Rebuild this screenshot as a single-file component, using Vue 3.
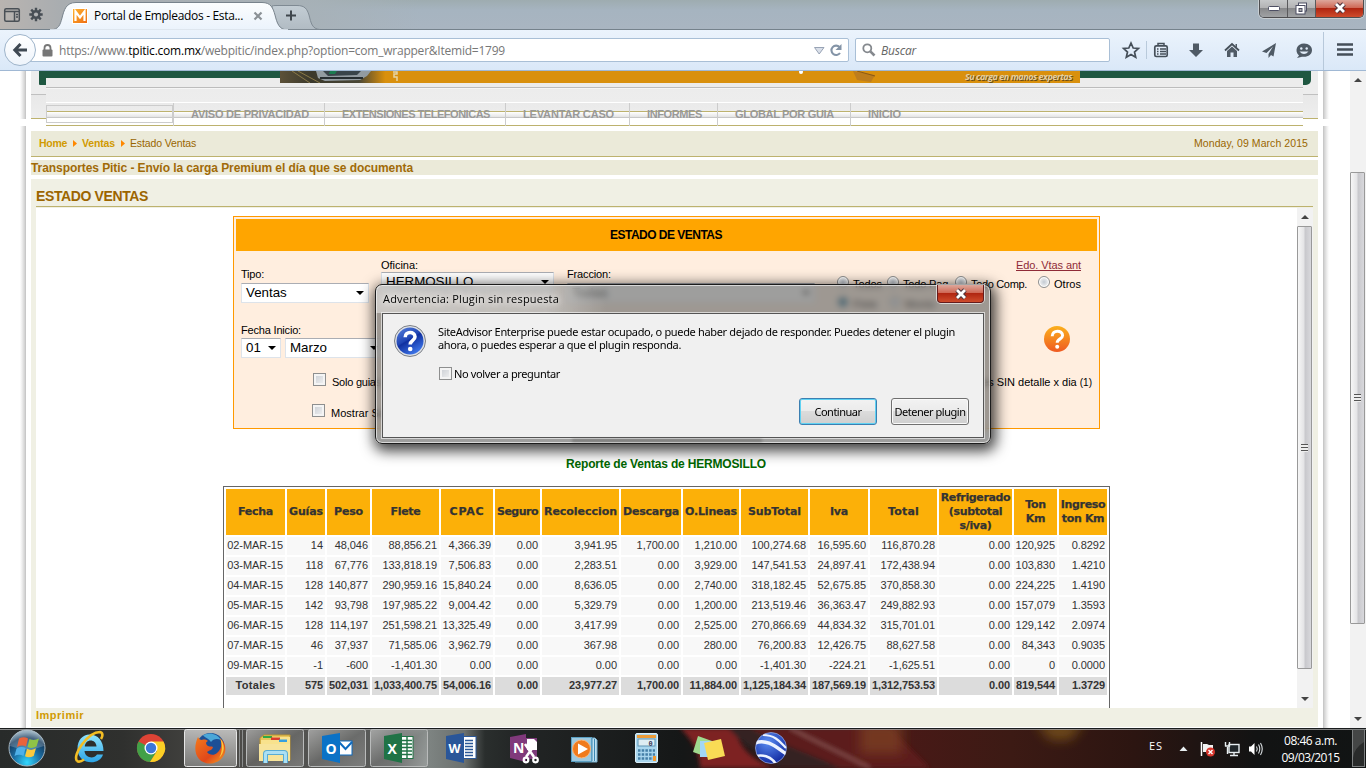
<script setup>
// Adjusts tracking so that a line of text fills the given width in pixels.
const vFit = {
  mounted(el, { value }) {
    const range = document.createRange()
    range.selectNodeContents(el)
    const gap = value - range.getBoundingClientRect().width
    el.style.letterSpacing = (gap / el.textContent.trim().length).toFixed(4) + 'px'
  }
}

const menu = [
  ['AVISO DE PRIVACIDAD', 151, 118],
  ['EXTENSIONES TELEFONICAS', 181, 148],
  ['LEVANTAR CASO', 124, 91],
  ['INFORMES', 88, 55],
  ['GLOBAL POR GUIA', 133, 99],
  ['INICIO', 60, 33]
]

const heads = ['Fecha', 'Guías', 'Peso', 'Flete', 'CPAC', 'Seguro', 'Recoleccion', 'Descarga', 'O.Lineas', 'SubTotal', 'Iva', 'Total', 'Refrigerado\n(subtotal\ns/iva)', 'Ton\nKm', 'Ingreso\nton Km']
const headWidths = [35, 34, 29, 30, 35, 41, 73, 56, 52, 53, 18, 31, 0, 0, 0]
const rows = [
  ['02-MAR-15', '14', '48,046', '88,856.21', '4,366.39', '0.00', '3,941.95', '1,700.00', '1,210.00', '100,274.68', '16,595.60', '116,870.28', '0.00', '120,925', '0.8292'],
  ['03-MAR-15', '118', '67,776', '133,818.19', '7,506.83', '0.00', '2,283.51', '0.00', '3,929.00', '147,541.53', '24,897.41', '172,438.94', '0.00', '103,830', '1.4210'],
  ['04-MAR-15', '128', '140,877', '290,959.16', '15,840.24', '0.00', '8,636.05', '0.00', '2,740.00', '318,182.45', '52,675.85', '370,858.30', '0.00', '224,225', '1.4190'],
  ['05-MAR-15', '142', '93,798', '197,985.22', '9,004.42', '0.00', '5,329.79', '0.00', '1,200.00', '213,519.46', '36,363.47', '249,882.93', '0.00', '157,079', '1.3593'],
  ['06-MAR-15', '128', '114,197', '251,598.21', '13,325.49', '0.00', '3,417.99', '0.00', '2,525.00', '270,866.69', '44,834.32', '315,701.01', '0.00', '129,142', '2.0974'],
  ['07-MAR-15', '46', '37,937', '71,585.06', '3,962.79', '0.00', '367.98', '0.00', '280.00', '76,200.83', '12,426.75', '88,627.58', '0.00', '84,343', '0.9035'],
  ['09-MAR-15', '-1', '-600', '-1,401.30', '0.00', '0.00', '0.00', '0.00', '0.00', '-1,401.30', '-224.21', '-1,625.51', '0.00', '0', '0.0000']
]
const totals = ['Totales', '575', '502,031', '1,033,400.75', '54,006.16', '0.00', '23,977.27', '1,700.00', '11,884.00', '1,125,184.34', '187,569.19', '1,312,753.53', '0.00', '819,544', '1.3729']
</script>

<template>
  <div class="screen">
    <header class="titlebar">
      <svg class="tabs" width="330" height="30" viewBox="0 0 330 30">
        <defs>
          <linearGradient id="tabg" x1="0" y1="0" x2="0" y2="1"><stop offset="0" stop-color="#fbfdfe" /><stop offset="1" stop-color="#ebf3fc" /></linearGradient>
          <linearGradient id="ntab" x1="0" y1="0" x2="0" y2="1"><stop offset="0" stop-color="#c3cdd4" /><stop offset="1" stop-color="#b1bbc3" /></linearGradient>
          <linearGradient id="fav" x1="0" y1="0" x2="1" y2="1"><stop offset="0" stop-color="#ffb632" /><stop offset="1" stop-color="#ee6b12" /></linearGradient>
        </defs>
        <path d="M272 29.500 V6 Q273 5.500 277 5.500 H297 C305 5.500 307 9 309 15 C311 23 312 29 320 29.500Z" fill="url(#ntab)" stroke="#7f8a93" />
        <path d="M50 30 C59 29.500 60 25 62 18 C64 10 66 2.500 76 2.500 H262 C271 2.500 273 8 275 15 C277 23 279 29.500 287 30Z" fill="url(#tabg)" stroke="#78838c" />
        <path d="M50 30H288" stroke="#edf4fc" stroke-width="1.500" />
        <g fill="none" stroke="#4a5056" stroke-width="1.500"><rect x="4.700" y="8.700" width="14.600" height="12.600" rx="1.500" /><path d="M5 11.500H19M14.500 12V21M16 14.500H18M16 17H18" /></g>
        <g stroke="#484f56" stroke-width="2.400"><path d="M36 7.800V21.200M29.300 14.500H42.700M31.200 9.700L40.800 19.300M40.800 9.700L31.200 19.300" /></g>
        <circle cx="36" cy="14.500" r="4.600" fill="#484f56" /><circle cx="36" cy="14.500" r="2.100" fill="#b3b5b6" />
        <rect x="72.500" y="8.500" width="15" height="15" fill="url(#fav)" stroke="#fff" />
        <path d="M75.500 21V11.500L80 17.500L84.500 11.500V21" fill="none" stroke="#fff" stroke-width="2.200" />
        <path d="M254.500 12.500L261.500 19.500M261.500 12.500L254.500 19.500" stroke="#8b9196" stroke-width="2.200" />
        <path d="M286 15.500H296M291 10.500V20.500" stroke="#3f464c" stroke-width="2" />
      </svg>
      <span class="tab-title"><span v-fit="149">Portal de Empleados - Esta...</span></span>
      <div class="winbtns">
        <div class="wb"><svg width="14" height="8"><rect x="1.500" y="2.500" width="11" height="4" rx="1" fill="#fff" stroke="#4d4f63" /></svg></div>
        <div class="wb"><svg width="14" height="13"><rect x="3.500" y="1" width="8" height="8" fill="#fff" stroke="#4d4f63" /><rect x="1" y="3.500" width="9" height="8.500" fill="#fff" stroke="#4d4f63" /><rect x="4" y="6.500" width="3" height="3" fill="#aaa" stroke="#4d4f63" /></svg></div>
        <div class="wb close"><svg width="14" height="12" viewBox="0 0 14 12"><path d="M3 2L11 10M11 2L3 10" stroke="#50343c" stroke-width="5" /><path d="M3 2L11 10M11 2L3 10" stroke="#fff" stroke-width="2.800" /></svg></div>
      </div>
    </header>

    <div class="toolbar">
      <div class="url">
        <svg class="lock" width="11" height="13" viewBox="0 0 11 13"><path d="M2.500 6V4a3 3 0 0 1 6 0V6" fill="none" stroke="#777" stroke-width="1.800" /><rect x="0.500" y="5.500" width="10" height="7" rx="1" fill="#777" /></svg>
        <span class="addr"><span v-fit="446">https://www.<b>tpitic.com.mx</b>/webpitic/index.php?option=com_wrapper&amp;Itemid=1799</span></span>
        <svg class="urlend" width="36" height="16" viewBox="0 0 36 16"><path d="M5.500 5.500H15L10.200 12Z" fill="#d9dfe9" stroke="#98a3b5" /><path d="M31 11A4.700 4.700 0 1 1 30.500 5" fill="none" stroke="#8494a7" stroke-width="2.100" /><path d="M32.500 2V8H26.500Z" fill="#8494a7" /></svg>
      </div>
      <div class="search">
        <svg width="14" height="14" viewBox="0 0 14 14"><circle cx="5.300" cy="5.300" r="4" fill="none" stroke="#85898e" stroke-width="1.800" /><path d="M8.300 8.300L12.500 12.500" stroke="#85898e" stroke-width="2.600" /></svg>
        <i v-fit="35">Buscar</i>
      </div>
      <svg class="tools" width="256" height="40" viewBox="1110 30 256 40">
        <path d="M1131 43L1133.200 48L1138.400 48.500L1134.500 52L1135.700 57.200L1131 54.400L1126.300 57.200L1127.500 52L1123.600 48.500L1128.800 48Z" fill="none" stroke="#454f59" stroke-width="1.700" />
        <path d="M1146.500 41V59" stroke="#b9cadb" />
        <rect x="1154.800" y="45.800" width="12.400" height="10.700" rx="1.500" fill="none" stroke="#454f59" stroke-width="1.700" /><path d="M1158 45V43.500H1164V45M1157 49H1158.500M1160 49H1166M1157 51.500H1158.500M1160 51.500H1166M1157 54H1158.500M1160 54H1166" fill="none" stroke="#454f59" stroke-width="1.500" />
        <path d="M1193 43.500H1199V50H1203L1196 57L1189 50H1193Z" fill="#4f5a65" />
        <path d="M1225 50.500L1232 44L1239 50.500" fill="none" stroke="#454f59" stroke-width="1.800" /><path d="M1227 51L1232 46.500L1237 51V57H1233.500V52.500H1230.500V57H1227ZM1235.500 44H1237V48L1235.500 46.500Z" fill="#505b66" />
        <path d="M1276 43L1262 51.500L1266.500 53L1273 46.500L1268.500 54V58L1271 55L1273.500 56.500Z" fill="#4f5a65" />
        <path d="M1304 43.500C1309 43.500 1312 46.500 1312 50.200C1312 54 1308.500 56.800 1304 56.800H1302L1297 58L1299 55.500C1294 51 1297 43.500 1304 43.500Z" fill="#4f5a65" /><circle cx="1301.300" cy="48.500" r="1.200" fill="#e1ecf8" /><circle cx="1306.700" cy="48.500" r="1.200" fill="#e1ecf8" /><path d="M1299.500 51.500H1308.500Q1304 56.500 1299.500 51.500" fill="#e1ecf8" />
        <path d="M1323.500 32V70" stroke="#b7c8da" />
        <path d="M1337 44.500H1353M1337 49.500H1353M1337 54.500H1353" stroke="#454f59" stroke-width="2.600" />
      </svg>
      <div class="back"><svg width="16" height="16" viewBox="0 0 16 16"><path d="M8.500 2L2.800 8L8.500 14M3 8H15" fill="none" stroke="#3f4953" stroke-width="3" /></svg></div>
    </div>

    <main class="page">
      <div class="edge left"></div>
      <div class="sheet">
        <div class="masthead">
          <div class="green"></div>
          <div class="strip">
            <nav class="menu">
              <div class="blank"></div>
              <div v-for="m in menu" :key="m[0]" class="mi" :style="{ width: m[1] + 'px' }"><span v-fit="m[2]">{{ m[0] }}</span></div>
            </nav>
          </div>
          <div class="banner">
            <svg width="120" height="12" viewBox="0 0 120 12"><defs><linearGradient id="ph" x1="0" x2="1"><stop offset="0" stop-color="#5c5138" /><stop offset=".3" stop-color="#3b392c" /><stop offset=".75" stop-color="#494635" /><stop offset="1" stop-color="#d98f0b" /></linearGradient></defs><rect width="105" height="12" fill="url(#ph)" /><path d="M12 0L30 12M18 0L40 12" stroke="#8a7a48" /><path d="M36 0H91L87 5L80 9L45 10L38 7Z" fill="#929ba1" /><path d="M43 0H81L77 4L48 5Z" fill="#39444a" /><path d="M50 0H57L55 3H49Z" fill="#1b7b51" /><path d="M40 7H83" stroke="#272e31" stroke-width="2" /><path d="M113 1H117V3H114V6H117V10" fill="none" stroke="#e5d3a4" stroke-width="1.500" /></svg>
            <svg class="deco" width="90" height="12" viewBox="0 0 90 12"><circle cx="10" cy="1" r="2" fill="#fff" /><path d="M114 0" /><path d="M62 0L84 4L80 11L66 9Z" fill="#bd7d1d" /><path d="M66 0L84 5" stroke="#8b5a16" /></svg>
            <span class="slogan" v-fit="107">Su carga en manos expertas</span>
          </div>
        </div>
        <div class="crumbs">
          <b v-fit="28">Home</b><svg width="5" height="7"><path d="M0 0L4 3.500L0 7Z" fill="#f80" /></svg>
          <b v-fit="33">Ventas</b><svg width="5" height="7"><path d="M0 0L4 3.500L0 7Z" fill="#f80" /></svg>
          <span v-fit="66">Estado Ventas</span>
          <span class="date" v-fit="114">Monday, 09 March 2015</span>
        </div>
        <div class="news"><b v-fit="382">Transportes Pitic - Envío la carga Premium el día que se documenta</b></div>
        <section class="panel">
          <h1><span v-fit="112">ESTADO VENTAS</span></h1>
          <div class="frame">
            <div class="doc">
              <div class="filters">
                <div class="fhead"><span v-fit="112">ESTADO DE VENTAS</span></div>
                <div class="row one">
                  <div class="field tipo"><label v-fit="23">Tipo:</label><div class="select">Ventas<i></i></div></div>
                  <div class="field oficina"><label v-fit="37">Oficina:</label><div class="select">HERMOSILLO<i></i></div></div>
                  <div class="field fraccion"><label v-fit="44">Fraccion:</label><div class="select">Todas<i></i></div></div>
                  <div class="radios">
                    <a v-fit="65">Edo. Vtas ant</a>
                    <div class="rline"><i class="radio"></i><span class="r1" v-fit="29">Todos</span><i class="radio"></i><span class="r2" v-fit="48">Todo Pag.</span><i class="radio"></i><span class="r3" v-fit="56">Todo Comp.</span><i class="radio"></i><span v-fit="27">Otros</span></div>
                    <div class="rline second"><i class="radio on"></i><span>Flete</span><i class="radio"></i><span>Monto</span></div>
                  </div>
                </div>
                <div class="row two">
                  <div class="field"><label v-fit="60">Fecha Inicio:</label><div class="pair"><div class="select day">01<i></i></div><div class="select month">Marzo<i></i></div></div></div>
                  <svg class="help" width="28" height="28" viewBox="0 0 28 28"><defs><linearGradient id="hg" x1="0" y1="0" x2="0" y2="1"><stop offset="0" stop-color="#fbb01c" /><stop offset="1" stop-color="#ef5a22" /></linearGradient></defs><circle cx="14" cy="14" r="13" fill="url(#hg)" /><path d="M9.200 11.200C9.200 4.500 19.600 4.600 19.600 10.600C19.600 14 14.200 13.800 14.200 17.800" fill="none" stroke="#fff" stroke-width="3" /><circle cx="14.200" cy="21.700" r="2" fill="#fff" /></svg>
                </div>
                <div class="row three"><i class="check"></i><span v-fit="49">Solo guias</span><span class="sin" v-fit="110">es SIN detalle x dia <small>(1)</small></span></div>
                <div class="row four"><i class="check"></i><span v-fit="54">Mostrar Sa</span></div>
              </div>
              <h2><span v-fit="200">Reporte de Ventas de HERMOSILLO</span></h2>
              <div class="report">
                <div v-for="(h, i) in heads" :key="h" class="th"><span v-if="headWidths[i]" v-fit="headWidths[i]">{{ h }}</span><span v-else class="multi">{{ h }}</span></div>
                <template v-for="r in rows" :key="r[0]"><div v-for="(c, i) in r" :key="i" class="td">{{ c }}</div></template>
                <div v-for="(c, i) in totals" :key="'t' + i" class="td tot">{{ c }}</div>
              </div>
            </div>
            <div class="bar inner"><i class="up"></i><div class="thumb"><i class="grip"></i></div><i class="down"></i></div>
          </div>
          <div class="print"><span v-fit="48">Imprimir</span></div>
        </section>
      </div>
      <div class="edge right"></div>
      <div class="bar outer"><i class="up"></i><div class="thumb"><i class="grip"></i></div><i class="down"></i></div>
    </main>

    <footer class="taskbar">
      <svg width="1366" height="40" viewBox="0 728 1366 40">
        <defs>
          <filter id="soft" x="-20%" y="-60%" width="140%" height="220%"><feGaussianBlur stdDeviation="6" /></filter>
          <filter id="soft2"><feGaussianBlur stdDeviation="2" /></filter>
          <linearGradient id="tb" x1="0" x2="1366" gradientUnits="userSpaceOnUse">
            <stop offset="0" stop-color="#282b2a" /><stop offset=".09" stop-color="#2f302e" /><stop offset=".17" stop-color="#4c4b48" /><stop offset=".29" stop-color="#5a5c5b" /><stop offset=".315" stop-color="#7d8381" /><stop offset=".34" stop-color="#6b706e" /><stop offset=".355" stop-color="#2a2e2d" /><stop offset=".38" stop-color="#222525" /><stop offset=".5" stop-color="#151717" /><stop offset=".65" stop-color="#4a1917" /><stop offset=".74" stop-color="#3c1a14" /><stop offset=".83" stop-color="#2c1511" /><stop offset=".92" stop-color="#121313" /><stop offset="1" stop-color="#111414" />
          </linearGradient>
          <linearGradient id="gloss" x1="0" y1="0" x2="0" y2="1"><stop offset="0" stop-color="#fff" stop-opacity=".62" /><stop offset="1" stop-color="#fff" stop-opacity=".3" /></linearGradient>
          <linearGradient id="gloss2" x1="0" y1="0" x2="1" y2="1"><stop offset="0" stop-color="#fff" stop-opacity=".45" /><stop offset=".5" stop-color="#fff" stop-opacity=".12" /><stop offset="1" stop-color="#fff" stop-opacity=".22" /></linearGradient>
          <radialGradient id="orb" cx=".5" cy=".9" r=".85"><stop offset="0" stop-color="#32d8ff" /><stop offset=".45" stop-color="#1b6ea4" /><stop offset=".8" stop-color="#153a5d" /><stop offset="1" stop-color="#7f9db0" /></radialGradient>
          <linearGradient id="ie" x1="0" y1="0" x2="0" y2="1"><stop offset="0" stop-color="#8fe4ff" /><stop offset="1" stop-color="#2ba4e6" /></linearGradient>
          <linearGradient id="fox" x1="0" y1="0" x2="1" y2="1"><stop offset="0" stop-color="#f47a1c" /><stop offset=".6" stop-color="#e0481a" /><stop offset="1" stop-color="#f7a325" /></linearGradient>
          <radialGradient id="ge" cx=".4" cy=".3" r=".8"><stop offset="0" stop-color="#5a8cf2" /><stop offset="1" stop-color="#0b2198" /></radialGradient>
          <clipPath id="globe"><circle cx="771" cy="748" r="15.500" /></clipPath>
        </defs>
        <rect y="728" width="1366" height="40" fill="url(#tb)" />
        <g filter="url(#soft2)"><path d="M680 728H735C738 745 750 760 775 768H700C700 750 690 738 680 728Z" fill="#7d2422" /><path d="M728 728H890L930 768H780C760 755 745 740 728 728Z" fill="#5c1a1b" /><path d="M728 728H750C780 745 815 755 840 768H780C760 755 740 742 728 728Z" fill="#2b2526" opacity=".8" /><path d="M790 728C820 744 840 752 870 768" stroke="#84504e" stroke-width="3" fill="none" /></g>
        <g filter="url(#soft)"><rect x="860" y="722" width="42" height="32" fill="#7b401f" opacity=".75" /><path d="M1035 722H1085L1070 740H1050Z" fill="#7a5418" opacity=".8" /></g>
        <path d="M0 728.500H1366" stroke="#1a1d1e" /><path d="M0 729.500H1366" stroke="#aaa" opacity=".75" />
        <g stroke="#b9bbbb">
          <rect x="184.500" y="729.500" width="52" height="37" rx="2" fill="url(#gloss)" stroke="#e6e6e6" /><path d="M239.500 730V767M242.500 730V767" stroke="#8b8d8d" />
          <rect x="246.500" y="729.500" width="57" height="37" rx="2" fill="url(#gloss2)" /><rect x="308.500" y="729.500" width="57" height="37" rx="2" fill="url(#gloss2)" /><rect x="370.500" y="729.500" width="57" height="37" rx="2" fill="url(#gloss2)" />
        </g>
        <circle cx="27" cy="748" r="18" fill="url(#orb)" stroke="#a7b7c1" /><path d="M10 746A17 16 0 0 1 44 746Q27 753 10 746" fill="#fff" opacity=".22" />
        <path d="M19 738.500Q24 736 28 738.500L26 746.500Q22 744.500 17 747Z" fill="#e9633b" /><path d="M29.500 739Q34 741 39 738.500L36.500 746.500Q32 749 27.500 747Z" fill="#8fc447" /><path d="M16.500 748.500Q21 746 25.600 748L23.500 756Q19 753.500 14.500 756Z" fill="#4fb0e8" /><path d="M27 748.700Q31.500 751 36 748.300L33.700 756Q29 758.500 25 756.300Z" fill="#fbc93d" />
        <path d="M89.500 734.500C98 734.500 103.500 741 103.500 751H84.500C85 758 94 759.500 97 754.500H103C100 766 77.500 765.500 77.500 748.500C77.500 740 83 734.500 89.500 734.500ZM84.800 746.500H96.500C96 738.500 85.500 738.500 84.800 746.500Z" fill="url(#ie)" fill-rule="evenodd" />
        <path d="M77 761C72 755 88 732 100 732C103 732.500 103 736 101 739M77 761C79 762.500 82 761 84 759.500" fill="none" stroke="#f3bd24" stroke-width="2.600" />
        <circle cx="151" cy="748" r="14" fill="#dd4335" /><path d="M151 748L138.500 741.500A14 14 0 0 0 150 762L157 751Z" fill="#42a047" /><path d="M151 741.500H163.500A14 14 0 0 1 150 762L157 751Z" fill="#fbcf25" /><circle cx="151" cy="748" r="6.500" fill="#fff" /><circle cx="151" cy="748" r="5.200" fill="#3c76d8" />
        <circle cx="210.500" cy="747" r="14" fill="#1c4f96" /><path d="M203 735.500C208 732 217 733 221 740C217 738 213 739 211 742C209 739 206 738 203 735.500Z" fill="#4ba7d8" />
        <path d="M198 737C199 739 200 740 202 740C204 739 207 740 208 741C205 742 206 745 208 746C210 747 211 746 213 747C212 751 209 750 207 752C209 755 214 756 217 753C222 749 222 743 220 738C226 743 226.500 750 224 755C219 765 205 766 199 759C193.500 752.500 195 743 198 737Z" fill="url(#fox)" />
        <path d="M220 738C225.500 744 225 753 219 758C222 754 223 745 220 738Z" fill="#fbc93a" />
        <path d="M260 738L264 735H290V760H260Z" fill="#e8c65b" stroke="#bb9431" /><path d="M261 740H271L273 737H290V760H261Z" fill="#f8e28d" /><rect x="263" y="736" width="9" height="2" fill="#32a944" /><rect x="271" y="737.500" width="9" height="2.500" fill="#d93d2e" /><rect x="279" y="739.500" width="8" height="2.500" fill="#369fe0" /><path d="M264 744H290V761H259V744Z" fill="#f7e49b" /><path d="M265.500 763V754Q265.500 752.500 267 752.500H284Q285.500 752.500 285.500 754V763" fill="none" stroke="#59acd4" stroke-width="5" /><path d="M265.500 763V754Q265.500 752.500 267 752.500H284Q285.500 752.500 285.500 754V763" fill="none" stroke="#ace0f4" stroke-width="3" />
        <rect x="337" y="741" width="15" height="14" fill="#fff" stroke="#0d6abf" /><path d="M339 742L345.500 749L352 742" fill="none" stroke="#0d6abf" stroke-width="2" /><path d="M322 736L340 733V763L322 759Z" fill="#0b72c6" /><text x="325.500" y="753.500" class="appletter">O</text>
        <rect x="401" y="736.500" width="12" height="22" fill="#fff" stroke="#207245" /><path d="M402 740.500H412M402 744H412M402 747.500H412M402 751H412M402 754.500H412M407 737V758" stroke="#207245" stroke-width="1.400" /><path d="M384 736L402 733V763L384 759Z" fill="#207346" /><text x="387.500" y="753.500" class="appletter">X</text>
        <rect x="463" y="736.500" width="13" height="22" fill="#fff" stroke="#2b5797" /><path d="M465 740.500H473M465 743.500H473M465 746.500H473M465 749.500H473M465 752.500H473M465 755.500H473" stroke="#2b5797" stroke-width="1.300" /><path d="M446 736L464 733V763L446 759Z" fill="#2a5699" /><text x="448.500" y="753" class="appletter w">W</text>
        <rect x="524" y="738" width="13" height="21" fill="#7d3b7a" /><path d="M527 739H534L537 742V750H527Z" fill="#fff" /><path d="M510 737L526 734V762L510 758Z" fill="#80397b" /><text x="513" y="753" class="appletter">N</text>
        <g fill="none" stroke="#fff" stroke-width="2.600"><path d="M525 744L534 757M536 743L526 757" /><circle cx="526" cy="760" r="2.300" stroke-width="2.200" /><circle cx="535.500" cy="760" r="2.300" stroke-width="2.200" /></g>
        <path d="M575 738H595L597 740V762H575Z" fill="#bfe0f0" stroke="#75afcd" /><path d="M592 738V761M594.500 739V761" stroke="#3c87b1" /><rect x="571.500" y="737.500" width="20" height="24" fill="#9ec9df" stroke="#5a9fc2" /><circle cx="581.500" cy="749" r="9" fill="#f07b1d" stroke="#fbb67a" /><path d="M578 743.500L588 749L578 754.500Z" fill="#fff" />
        <rect x="635.500" y="733.500" width="22" height="29" rx="1.500" fill="#a9d6ee" stroke="#dceff8" /><rect x="637" y="735" width="19" height="3" fill="#ed9c39" /><rect x="638" y="739" width="17" height="7" fill="#deedf3" stroke="#5f94b3" /><text x="648.500" y="745.500" class="zero">0</text><path d="M638 750.500H655M638 754.500H655M638 758.500H655" stroke="#447fa7" stroke-width="2.400" stroke-dasharray="2.500 1.200" /><rect x="653" y="756" width="3" height="5" fill="#f39a32" />
        <path d="M698 736L712 741L707 757L693 752Z" fill="#a0da8f" /><path d="M700 741H716V757H700Z" fill="#a3d7f4" /><path d="M704 743L721 739L725 756L708 760Z" fill="#f9db55" />
        <circle cx="771" cy="748" r="15.500" fill="url(#ge)" stroke="#9fb2e8" stroke-width=".7" /><g clip-path="url(#globe)" fill="none" stroke="#edf3ff"><path d="M755 743C768 738 778 749 788 755" stroke-width="3.500" /><path d="M763 735C776 735 781 743 786 748" stroke-width="2.200" /><path d="M755 756C765 754 772 758 776 764" stroke-width="2.500" /></g>
        <path d="M1179.500 751L1183.500 746.500L1187.500 751Z" fill="#e8eef0" />
        <path d="M1201.500 742V756" stroke="#fff" stroke-width="1.500" /><path d="M1203 744H1207L1209 745H1213V753H1208L1206 752H1203Z" fill="#f2f2f2" /><circle cx="1210.500" cy="752" r="4.500" fill="#d8362c" /><path d="M1208.500 750L1212.500 754M1212.500 750L1208.500 754" stroke="#fff" stroke-width="1.400" />
        <rect x="1229" y="744.500" width="10" height="8" fill="#20262a" stroke="#e8eef1" stroke-width="1.400" /><path d="M1230 755.500H1238M1234 753V755M1225.500 742V746.500M1229.500 742V746.500M1225 746H1230M1227.500 747V754" stroke="#e8eef1" stroke-width="1.400" />
        <path d="M1249 746.500H1251L1254.500 743V755L1251 751.500H1249Z" fill="#fff" /><path d="M1256.500 746.500Q1258 749 1256.500 751.500M1258.500 744.500Q1261 749 1258.500 753.500M1260.500 743Q1264 749 1260.500 755" fill="none" stroke="#dce1e4" stroke-width="1.100" />
        <rect x="1352.500" y="729.500" width="12" height="37" fill="#fff" fill-opacity=".1" stroke="#7c7f80" /><path d="M1353 730H1364V742Q1354 748 1353 758Z" fill="#fff" opacity=".13" />
      </svg>
      <span class="lang" v-fit="14">ES</span>
      <div class="clock"><span v-fit="53">08:46 a.m.</span><span v-fit="58">09/03/2015</span></div>
    </footer>

    <div class="dialog">
      <div class="dtitle"><span v-fit="176">Advertencia: Plugin sin respuesta</span></div>
      <div class="dclose"><svg width="14" height="12" viewBox="0 0 14 12"><path d="M3 2L11 10M11 2L3 10" stroke="#50343c" stroke-width="4.800" /><path d="M3 2L11 10M11 2L3 10" stroke="#fff" stroke-width="2.800" /></svg></div>
      <div class="client">
        <svg class="q" width="34" height="34" viewBox="0 0 34 34"><defs><linearGradient id="qb" x1="0" y1="0" x2="0.600" y2="1"><stop offset="0" stop-color="#5a83dd" /><stop offset=".5" stop-color="#2045b4" /><stop offset=".55" stop-color="#1030a0" /><stop offset="1" stop-color="#3c73e6" /></linearGradient></defs><circle cx="17" cy="17" r="15.500" fill="#dfe2e6" stroke="#7b7f86" /><circle cx="17" cy="17" r="13.500" fill="url(#qb)" /><path d="M12.200 13.200C12.200 7 22 7.200 22 12.800C22 16.500 17.200 16.200 17.200 20.500" fill="none" stroke="#fff" stroke-width="3.600" /><circle cx="17.200" cy="25" r="2.300" fill="#fff" /></svg>
        <div class="msg">
          <p><span v-fit="517">SiteAdvisor Enterprise puede estar ocupado, o puede haber dejado de responder. Puedes detener el plugin</span></p>
          <p><span v-fit="243">ahora, o puedes esperar a que el plugin responda.</span></p>
          <div class="again"><i class="check"></i><span v-fit="106">No volver a preguntar</span></div>
        </div>
        <div class="dbtns"><div class="btn primary"><span v-fit="47">Continuar</span></div><div class="btn"><span v-fit="71">Detener plugin</span></div></div>
      </div>
      <div class="haze"></div>
    </div>
  </div>
</template>

<style>
html, body { margin: 0; overflow: hidden; }
</style>

<style scoped>
* { box-sizing: border-box; }
.screen { position: relative; width: 1366px; height: 768px; display: flex; flex-direction: column; overflow: hidden; background: #fff; font: 11px/14px "Liberation Sans", Arial, sans-serif; color: #000; white-space: nowrap; }
svg { display: block; flex: none; }
.titlebar { flex: none; display: flex; height: 30px; border-bottom: 1px solid #75828c; background: linear-gradient(90deg, #b9b4b0 0, #a9adb0 60px, #a7b1b7 300px, transparent 420px), linear-gradient(#9eacb0, #a6b4c0 35%, #a9b5c1); }
.tabs { width: 330px; }
.tab-title { margin-left: -236px; padding-top: 7px; font: 12px/18px "Open Sans", "Noto Sans", sans-serif; }
.winbtns { margin-left: auto; margin-right: 2px; height: 18px; display: flex; border: 1px solid #4e4e50; border-top: 0; border-radius: 0 0 5px 5px; overflow: hidden; box-shadow: 0 0 0 1px #c8ced2; }
.wb { width: 28px; display: flex; align-items: center; justify-content: center; background: linear-gradient(#c6c8c9, #b3b3b4 45%, #88898b 50%, #a0a2a4); border-right: 1px solid #5a5a5c; padding-bottom: 1px; }
.wb.close { width: 47px; border: 0; background: linear-gradient(#dda79b, #cf6956 45%, #b02611 50%, #cf4c2c); }
.toolbar { position: relative; flex: none; height: 41px; display: flex; align-items: flex-start; padding: 8px 0 0 28px; background: linear-gradient(#ebf3fc, #dae8f8); border-bottom: 1px solid #a0b8d4; }
.url { width: 821px; height: 24px; border: 1px solid #a9bfd6; border-radius: 2px; background: #fff; display: flex; align-items: center; padding-left: 13px; }
.addr { margin-left: 6px; width: 446px; padding-top: 1px; font: 12px/20px "Open Sans", "Noto Sans", sans-serif; color: #777; }
.addr b { font-weight: 400; color: #000; }
.urlend { margin-left: auto; margin-right: 3px; }
.search { margin-left: 6px; width: 255px; height: 24px; border: 1px solid #a9bfd6; border-radius: 2px; background: #fff; display: flex; align-items: center; gap: 5px; padding-left: 6px; font: italic 12px/20px "Open Sans", "Noto Sans", sans-serif; color: #666; }
.search i { padding-top: 1px; }
.tools { margin-top: -8px; }
.back { position: absolute; left: 4px; top: 4px; width: 32px; height: 32px; border: 1px solid #9eb4ca; border-radius: 50%; background: linear-gradient(#fff, #eef4fb); display: flex; align-items: center; justify-content: center; }
.page { flex: none; height: 657px; display: flex; background: #fff; }
.edge { width: 31px; height: 657px; flex: none; }
.edge.left { background: linear-gradient(transparent 48px, #fff 48px, #fff 55px, transparent 55px), linear-gradient(90deg, #fff 20px, #eee 22px, #d0d0d0 25px, #c0c0c0 26px, #fff 26px); }
.edge.right { width: 32px; background: linear-gradient(transparent 48px, #fff 48px, #fff 55px, transparent 55px), linear-gradient(90deg, #fff 5px, #c0c0c0 5px, #d0d0d0 6px, #eee 9px, #fff 11px); }
.sheet { width: 1287px; height: 656px; flex: none; display: flex; flex-direction: column; }
.masthead { flex: none; height: 55px; display: grid; align-items: start; background: linear-gradient(#ededed 23px, #c0c0c0 23px, #c0c0c0 24px, #e8e8e8 24px, #eee 47px, #bdb26e 47px, #bdb26e 48px, #fff 48px); }
.masthead > * { grid-area: 1 / 1; }
.green { margin: 0 7px 0 8px; height: 14px; background: #1f5741; border-radius: 0 0 5px 1px; }
.strip { margin: 7px 15px 0; height: 48px; padding-top: 25px; background: linear-gradient(#ececec 9px, #bcbcbc 9px, #bcbcbc 10px, #fff 10px, #ececec 11px, #ededed 24px, #fff 24px, #fff 25px, #eaeaea 25px, #ececec 33px, #bdb26e 33px, #bdb26e 34px, #fff 34px, #e4e4e4 39px, #c8c8c8 39px, #c8c8c8 40px, #fff 40px, #fff 47px, #bdb26e 47px); }
.menu { display: flex; height: 23px; font-weight: 700; color: #999; }
.blank { width: 127px; height: 18px; margin-top: 2px; border: 1px solid #ccc; }
.mi { border-left: 1px solid #ccc; padding: 4px 0 0 17px; font-size: 11px; line-height: 14px; }
.banner { margin-left: 249px; width: 800px; height: 12px; overflow: hidden; background: #d9900d; display: flex; justify-content: space-between; }
.deco { margin-left: 307px; }
.slogan { margin-right: 8px; padding-top: 1px; font: italic 700 9px/10px "Open Sans", sans-serif; color: #e4cf9f; text-shadow: 1px 1px 0 #6b4d17; }
.crumbs { flex: none; margin-top: 5px; height: 26px; background: #ebead9; border-bottom: 1px solid #bdb26e; display: flex; align-items: center; padding: 0 10px 1px 8px; color: #960; font-size: 10.5px; }
.crumbs b { color: #d19a02; }
.crumbs svg { margin: 0 4px 0 6px; }
.date { margin-left: auto; }
.news { flex: none; margin-top: 3px; height: 15px; background: #ebead9; color: #a16a08; font-size: 12px; line-height: 16px; }
.panel { flex: none; margin-top: 4px; height: 548px; background: #f0f0e4; padding: 0 5px; display: flex; flex-direction: column; }
h1 { flex: none; margin: 0; height: 28px; border-bottom: 1px solid #bdb26e; font-size: 14px; line-height: 35px; color: #9c6500; }
.frame { flex: none; margin-top: 1px; height: 500px; background: #fff; display: flex; overflow: hidden; }
.doc { width: 1261px; padding-left: 187px; padding-top: 8px; }
.filters { margin-left: 10px; width: 867px; height: 213px; border: 1px solid #f90; background: #ffeedf; padding: 2px; }
.fhead { height: 32px; background: #ffa500; text-align: center; padding-right: 1px; font: 700 12px/32px "Liberation Sans", Arial, sans-serif; }
.row { display: flex; }
.field { display: flex; flex-direction: column; align-items: flex-start; }
.field label { height: 14px; line-height: 14px; }
.select { margin-top: 2px; height: 20px; border: 1px solid #dde3ea; border-top-color: #abadb3; background: #fff; font-size: 13.333px; line-height: 18px; padding-left: 4px; display: flex; justify-content: space-between; align-items: center; }
.select i { margin-right: 4px; border: 4px solid transparent; border-top-color: #000; border-bottom: 0; }
.one { height: 72px; }
.tipo { margin-left: 5px; padding-top: 16px; width: 140px; }
.tipo .select { width: 128px; }
.oficina { padding-top: 7px; width: 186px; }
.oficina .select { width: 173px; margin-top: 0; }
.fraccion { padding-top: 16px; width: 270px; }
.fraccion .select { width: 248px; }
.radios { width: 244px; padding-top: 7px; display: flex; flex-direction: column; }
.radios a { align-self: flex-end; color: #8f2b37; text-decoration: underline; }
.rline { display: flex; align-items: center; height: 16px; margin-top: 2px; }
.rline span { flex: none; margin-left: 4px; padding-top: 3px; }
.second { margin-top: 4px; }
.second span { width: 36px; }
.radio { flex: none; width: 12px; height: 12px; margin-top: -1px; border: 1px solid #8e8f8f; border-radius: 50%; background: radial-gradient(#c3cad2, #f4f4f4 70%); box-shadow: inset 0 0 0 1px #fff; }
.radio.on { background: #1d6688; }
.r1 { width: 30px; margin-right: 4px; }
.r2 { width: 48px; margin-right: 4px; }
.r3 { width: 63px; margin-right: 4px; }
.two { height: 47px; padding-left: 5px; }
.pair { display: flex; gap: 4px; }
.pair .select { margin-top: 1px; }
.day { width: 40px; }
.month { width: 98px; }
.help { margin-left: 660px; margin-top: 2px; }
.check { width: 13px; height: 13px; flex: none; border: 1px solid #8e8f8f; background: linear-gradient(135deg, #c8ccd2, #f4f4f4); box-shadow: inset 0 0 0 2px #f4f4f4; }
.three, .four { align-items: flex-start; height: 31px; padding-left: 77px; padding-top: 3px; }
.four { padding-left: 76px; }
.three span, .four span { margin-left: 6px; padding-top: 2px; }
.three .sin { margin-left: auto; margin-right: 5px; }
small { font-size: 10px; }
h2 { margin: 0; height: 57px; padding-top: 28px; width: 886px; text-align: center; font-size: 12px; line-height: 14px; color: #060; }
.report { width: 887px; height: 240px; border: 1px solid #666; border-bottom: 0; padding: 2px; display: grid; gap: 2px; grid-template-columns: 59px 38px 43px 67px 52px 45px 77px 60px 56px 67px 58px 67px 73px 43px 48px; grid-template-rows: 46px repeat(8, 18px); color: #333; }
.th { background: #fcb008; display: flex; align-items: center; justify-content: center; text-align: center; padding-bottom: 1px; font: 700 11px/14px "DejaVu Sans", sans-serif; -webkit-text-stroke: .25px #333; }
.multi { white-space: pre-line; letter-spacing: -.35px; margin: 0 -3px; }
.td { background: #f8f8f8; padding-right: 2px; text-align: right; line-height: 17px; letter-spacing: -.05px; }
.tot { background: #dcdcdc; font-weight: 700; letter-spacing: -.1px; }
.tot:nth-child(15n + 1) { text-align: center; padding: 0; letter-spacing: .3px; }
.print { padding-top: 0; font: 700 11px/14px "Liberation Sans", Arial, sans-serif; color: #d19a02; }
.bar { width: 16px; flex: none; background: #f2f2f2; display: flex; flex-direction: column; }
.up, .down { height: 18px; flex: none; display: flex; justify-content: center; align-items: center; }
.up::before, .down::before { content: ""; border: 4px solid transparent; border-bottom: 4px solid #444; border-top: 0; }
.down { margin-top: auto; }
.down::before { border: 4px solid transparent; border-top: 4px solid #444; border-bottom: 0; }
.thumb { flex: none; width: 15px; height: 443px; border: 1px solid #999; border-radius: 1px; background: linear-gradient(90deg, #f6f6f6, #e4e4e6 45%, #c8c8cc 55%, #d8d8dc); display: flex; align-items: center; justify-content: center; }
.outer .thumb { margin-top: 83px; height: 452px; }
.grip { width: 7px; height: 8px; background: repeating-linear-gradient(#555 0 1px, #eee 1px 3px); }
.taskbar { position: relative; flex: none; height: 40px; color: #fff; }
.appletter { font: 700 14px "Open Sans", sans-serif; fill: #fff; }
.appletter.w { font-size: 12.5px; }
.zero { font: 700 7px "Liberation Mono", monospace; fill: #335; }
.lang { position: absolute; left: 1149px; top: 10px; font: 11px/16px "Open Sans", sans-serif; }
.clock { position: absolute; left: 1271px; top: 5px; width: 79px; display: flex; flex-direction: column; align-items: center; font: 12px/16.5px "Open Sans", sans-serif; }
.dialog { position: absolute; left: 375px; top: 284px; width: 616px; height: 160px; border: 1px solid #1c1c1c; border-radius: 7px; padding: 28px 6px 6px; backdrop-filter: blur(3px); background: linear-gradient(90deg, rgba(255,255,255,.45), rgba(255,255,255,.35) 170px, transparent 230px) 0 0 / 100% 28px no-repeat, rgba(108,108,106,.66); box-shadow: inset 0 0 0 1px rgba(255,255,255,.6), 2px 4px 14px 3px rgba(0,0,0,.75); }
.dtitle { position: absolute; left: 7px; top: 6px; font: 11px/16px "Open Sans", "Noto Sans", sans-serif; text-shadow: 0 0 6px #fff, 0 0 8px #fff; }
.dclose { position: absolute; right: 6px; top: 0; width: 47px; height: 18px; border: 1px solid #651c1c; border-top: 0; border-radius: 0 0 4px 4px; box-shadow: 0 0 0 1px rgba(255,255,255,.6); background: linear-gradient(#dda79b, #cf6956 45%, #b02611 50%, #cf4c2c); display: flex; align-items: center; justify-content: center; }
.client { height: 125px; border: 1px solid #555; background: #f0f0f0; box-shadow: 0 0 0 1px rgba(255,255,255,.6); display: grid; grid-template-columns: 45px 1fr; grid-template-rows: 74px 27px; padding: 10px 9px 0 10px; font: 11px/13px "Noto Sans", "Open Sans", sans-serif; }
.msg { padding-top: 1px; }
p { margin: 0; }
.again { display: flex; margin-top: 16px; padding-left: 1px; }
.again span { margin-left: 2px; }
.dbtns { grid-column: 1 / 3; display: flex; justify-content: flex-end; gap: 14px; margin: 0 5px 0 0; }
.btn { width: 78px; height: 27px; border: 1px solid #707070; border-radius: 3px; background: linear-gradient(#f2f2f2, #ebebeb 48%, #dcdcdc 50%, #cfcfcf); box-shadow: inset 0 0 0 1px #fafafa; text-align: center; line-height: 25px; }
.btn.primary { border-color: #3c7fb1; box-shadow: inset 0 0 0 1px #5fd2f3; }
.haze { width: 190px; height: 3px; margin: 1px 0 0 190px; background: #555; opacity: .5; filter: blur(1.5px); }
</style>
